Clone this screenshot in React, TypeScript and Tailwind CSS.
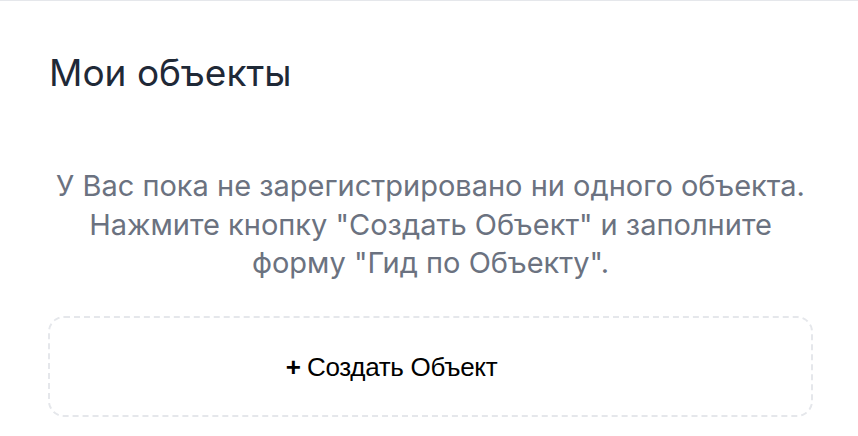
export default function App() {
  return (
    <div className="w-[858px] h-[436px] bg-white border-t border-gray-200 pl-12 pr-[45px] pt-[50px] overflow-hidden font-[family-name:Inter,'Noto_Sans',sans-serif]">
      <h1 className="pl-[1px] text-[37px] leading-[44px] font-normal text-[#1f2937]">
        Мои объекты
      </h1>
      <p className="mt-[72px] text-center text-[29px] leading-[38.5px] text-[#6b7280]">
        У Вас пока не зарегистрировано ни одного объекта.
        <br />
        Нажмите кнопку "Создать Объект" и заполните
        <br />
        форму "Гид по Объекту".
      </p>
      <button className="mt-[33px] w-full h-[101px] border-2 border-dashed border-gray-200 rounded-2xl flex items-center justify-center pr-[78px] pt-[3px] text-[26px] text-black font-[family-name:'Liberation_Sans',Arial,sans-serif]">
        <span className="font-bold">+</span>
        <span className="ml-[6px] tracking-[-0.3px]">Создать Объект</span>
      </button>
    </div>
  );
}
